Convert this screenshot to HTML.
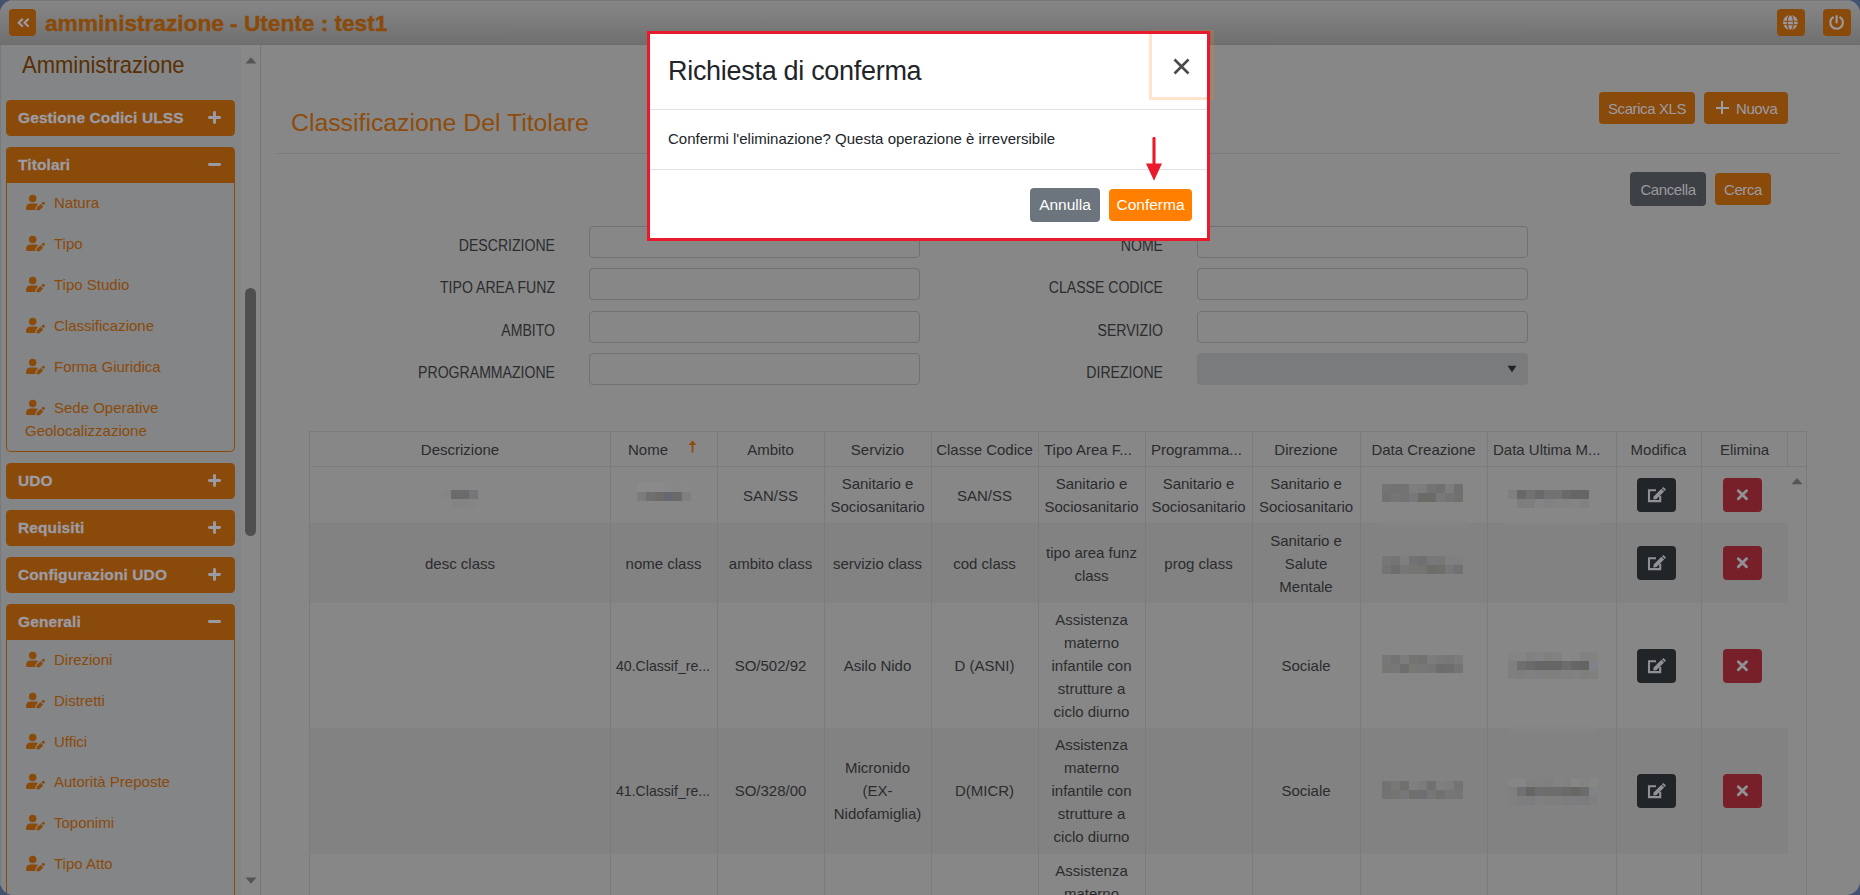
<!DOCTYPE html>
<html><head><meta charset="utf-8">
<style>
*{box-sizing:border-box;}
html,body{margin:0;padding:0;}
body{width:1860px;height:895px;overflow:hidden;background:#435270;font-family:"Liberation Sans",sans-serif;position:relative;}
.win{position:absolute;left:0;top:0;width:1860px;height:895px;border-radius:14px;overflow:hidden;background:#878787;}
.a{position:absolute;white-space:nowrap;}
.hdr{position:absolute;left:0;top:0;width:1860px;height:45px;background:linear-gradient(#878787,#707070 97%,#6a6a6a);}
.obtn{position:absolute;background:#8a4a0a;border-radius:4px;}
.side{position:absolute;left:0;top:45px;width:241px;height:850px;background:#848587;border-left:1px solid #77797d;}
.track{position:absolute;left:241px;top:45px;width:19px;height:850px;background:#888888;}
.vline{position:absolute;left:260px;top:45px;width:1px;height:850px;background:#767676;}
.ph{position:absolute;left:6px;width:229px;height:36px;background:#8a4a0a;border-radius:4.5px;}
.ph .t{position:absolute;left:12px;top:8.5px;font-weight:bold;font-size:15.5px;-webkit-text-stroke:0.3px #9c9ca6;letter-spacing:0.1px;color:#9c9ca6;white-space:nowrap;}
.ph .pl{position:absolute;left:202px;top:11px;width:13.3px;height:13.3px;}
.ph .pl:before{content:"";position:absolute;left:0;top:5.2px;width:13.3px;height:2.8px;background:#9a9aa4;border-radius:1.4px;}
.ph .pl.plus:after{content:"";position:absolute;left:5.25px;top:0;width:2.8px;height:13.3px;background:#9a9aa4;border-radius:1.4px;}
.pbody{position:absolute;left:6px;width:229px;border:1px solid #8a4a0a;border-top:none;border-radius:0 0 5px 5px;}
.it{position:absolute;left:20px;font-size:15px;color:#8a4a0a;white-space:nowrap;}
.ic{position:absolute;left:26px;width:20px;height:16px;}
.lbl{font-size:16px;color:#2b2c2e;transform:scaleX(0.88);transform-origin:100% 50%;}
.inp{width:331px;height:32px;border:1px solid #6f7174;border-radius:4px;}
.inp.sel{background:#7a7b7d;border-color:#7a7b7d;}
.hl{height:1px;background:#7a7b7d;}
.vl{width:1px;background:#7a7b7d;}
.td{font-size:15px;line-height:23px;color:#2b2c2e;text-align:center;}
.ebtn{width:39px;height:34px;background:#212528;border-radius:4px;}
.dbtn{width:39px;height:34px;background:#77202a;border-radius:4px;}
</style></head><body>
<div class="win">
  <div class="hdr"></div>
  <div class="a" style="left:0;top:0;width:1860px;height:1px;background:#75777b"></div>
  <div class="obtn" style="left:9px;top:9px;width:27px;height:27px;">
    <svg width="27" height="27" viewBox="0 0 27 27" style="position:absolute;left:0;top:0"><path d="M13.2 10.4 L9.6 13.7 L13.2 17.0 M19.0 10.4 L15.4 13.7 L19.0 17.0" stroke="#9a9aa4" stroke-width="2.2" fill="none" stroke-linecap="round" stroke-linejoin="round"/></svg>
  </div>
  <div class="a" id="ttl" style="left:45px;top:10px;font-size:22.8px;letter-spacing:-0.07px;-webkit-text-stroke:0.35px #8a4a0a;font-weight:bold;color:#8a4a0a;">amministrazione - Utente : test1</div>
  <div class="obtn" style="left:1777px;top:9px;width:28px;height:27px;">
    <svg width="28" height="27" viewBox="0 0 28 27" style="position:absolute;left:0;top:0"><circle cx="13.4" cy="13.5" r="7.4" fill="#9a9aa4"/><g fill="none" stroke="#8a4a0a" stroke-width="1.1"><ellipse cx="13.4" cy="13.5" rx="3.1" ry="7.8"/><line x1="5" y1="12.2" x2="22" y2="12.2"/><line x1="5" y1="15.8" x2="22" y2="15.8"/></g></svg>
  </div>
  <div class="obtn" style="left:1823px;top:9px;width:28px;height:27px;">
    <svg width="28" height="27" viewBox="0 0 28 27" style="position:absolute;left:0;top:0"><g fill="none" stroke="#9a9aa4" stroke-width="2.1" stroke-linecap="round"><path d="M9.99 8.34 A6.3 6.3 0 1 0 17.21 8.34"/><line x1="13.6" y1="7.1" x2="13.6" y2="13.5"/></g></svg>
  </div>

  <div class="side"></div>
  <div class="track"></div>
  <div class="vline"></div>
<!--SIDE-->
<div class="a" id="amm" style="left:22px;top:52.5px;font-size:22px;color:#573004;transform:scaleY(1.12);transform-origin:0 20.3px;">Amministrazione</div>
<div class="ph" style="top:100px"><div class="t">Gestione Codici ULSS</div><div class="pl plus"></div></div>
<div class="ph" style="top:147px;border-radius:4.5px 4.5px 0 0"><div class="t">Titolari</div><div class="pl"></div></div>
<div class="pbody" style="top:182px;height:270px"></div>
<svg class="a" style="left:22px;top:190px" width="28" height="24" viewBox="0 0 28 24"><g fill="#8a4a0a"><circle cx="10.7" cy="8.6" r="3.75"/><path d="M4 18.4 Q4 13.4 8.8 13.4 L13.4 13.4 Q15.4 13.4 15.9 14.5 L13.6 17.2 L13.3 20 L5.3 20 Q4 20 4 18.4Z"/><path d="M14.5 20.2 L14.9 17.6 L18.6 13.9 L21.2 16.5 L17.5 20.2Z"/><circle cx="21.3" cy="13.3" r="1.5"/></g></svg>
<div class="it" style="left:54px;top:193.5px">Natura</div>
<svg class="a" style="left:22px;top:231px" width="28" height="24" viewBox="0 0 28 24"><g fill="#8a4a0a"><circle cx="10.7" cy="8.6" r="3.75"/><path d="M4 18.4 Q4 13.4 8.8 13.4 L13.4 13.4 Q15.4 13.4 15.9 14.5 L13.6 17.2 L13.3 20 L5.3 20 Q4 20 4 18.4Z"/><path d="M14.5 20.2 L14.9 17.6 L18.6 13.9 L21.2 16.5 L17.5 20.2Z"/><circle cx="21.3" cy="13.3" r="1.5"/></g></svg>
<div class="it" style="left:54px;top:234.5px">Tipo</div>
<svg class="a" style="left:22px;top:272px" width="28" height="24" viewBox="0 0 28 24"><g fill="#8a4a0a"><circle cx="10.7" cy="8.6" r="3.75"/><path d="M4 18.4 Q4 13.4 8.8 13.4 L13.4 13.4 Q15.4 13.4 15.9 14.5 L13.6 17.2 L13.3 20 L5.3 20 Q4 20 4 18.4Z"/><path d="M14.5 20.2 L14.9 17.6 L18.6 13.9 L21.2 16.5 L17.5 20.2Z"/><circle cx="21.3" cy="13.3" r="1.5"/></g></svg>
<div class="it" style="left:54px;top:275.5px">Tipo Studio</div>
<svg class="a" style="left:22px;top:313px" width="28" height="24" viewBox="0 0 28 24"><g fill="#8a4a0a"><circle cx="10.7" cy="8.6" r="3.75"/><path d="M4 18.4 Q4 13.4 8.8 13.4 L13.4 13.4 Q15.4 13.4 15.9 14.5 L13.6 17.2 L13.3 20 L5.3 20 Q4 20 4 18.4Z"/><path d="M14.5 20.2 L14.9 17.6 L18.6 13.9 L21.2 16.5 L17.5 20.2Z"/><circle cx="21.3" cy="13.3" r="1.5"/></g></svg>
<div class="it" style="left:54px;top:316.5px">Classificazione</div>
<svg class="a" style="left:22px;top:354px" width="28" height="24" viewBox="0 0 28 24"><g fill="#8a4a0a"><circle cx="10.7" cy="8.6" r="3.75"/><path d="M4 18.4 Q4 13.4 8.8 13.4 L13.4 13.4 Q15.4 13.4 15.9 14.5 L13.6 17.2 L13.3 20 L5.3 20 Q4 20 4 18.4Z"/><path d="M14.5 20.2 L14.9 17.6 L18.6 13.9 L21.2 16.5 L17.5 20.2Z"/><circle cx="21.3" cy="13.3" r="1.5"/></g></svg>
<div class="it" style="left:54px;top:357.5px">Forma Giuridica</div>
<svg class="a" style="left:22px;top:395px" width="28" height="24" viewBox="0 0 28 24"><g fill="#8a4a0a"><circle cx="10.7" cy="8.6" r="3.75"/><path d="M4 18.4 Q4 13.4 8.8 13.4 L13.4 13.4 Q15.4 13.4 15.9 14.5 L13.6 17.2 L13.3 20 L5.3 20 Q4 20 4 18.4Z"/><path d="M14.5 20.2 L14.9 17.6 L18.6 13.9 L21.2 16.5 L17.5 20.2Z"/><circle cx="21.3" cy="13.3" r="1.5"/></g></svg>
<div class="it" style="left:54px;top:398.5px">Sede Operative</div>
<div class="it" style="left:25px;top:421.5px">Geolocalizzazione</div>
<div class="ph" style="top:463px"><div class="t">UDO</div><div class="pl plus"></div></div>
<div class="ph" style="top:510px"><div class="t">Requisiti</div><div class="pl plus"></div></div>
<div class="ph" style="top:557px"><div class="t">Configurazioni UDO</div><div class="pl plus"></div></div>
<div class="ph" style="top:604px;border-radius:4.5px 4.5px 0 0"><div class="t">Generali</div><div class="pl"></div></div>
<div class="pbody" style="top:639px;height:300px"></div>
<svg class="a" style="left:22px;top:647px" width="28" height="24" viewBox="0 0 28 24"><g fill="#8a4a0a"><circle cx="10.7" cy="8.6" r="3.75"/><path d="M4 18.4 Q4 13.4 8.8 13.4 L13.4 13.4 Q15.4 13.4 15.9 14.5 L13.6 17.2 L13.3 20 L5.3 20 Q4 20 4 18.4Z"/><path d="M14.5 20.2 L14.9 17.6 L18.6 13.9 L21.2 16.5 L17.5 20.2Z"/><circle cx="21.3" cy="13.3" r="1.5"/></g></svg>
<div class="it" style="left:54px;top:650.5px">Direzioni</div>
<svg class="a" style="left:22px;top:688px" width="28" height="24" viewBox="0 0 28 24"><g fill="#8a4a0a"><circle cx="10.7" cy="8.6" r="3.75"/><path d="M4 18.4 Q4 13.4 8.8 13.4 L13.4 13.4 Q15.4 13.4 15.9 14.5 L13.6 17.2 L13.3 20 L5.3 20 Q4 20 4 18.4Z"/><path d="M14.5 20.2 L14.9 17.6 L18.6 13.9 L21.2 16.5 L17.5 20.2Z"/><circle cx="21.3" cy="13.3" r="1.5"/></g></svg>
<div class="it" style="left:54px;top:691.5px">Distretti</div>
<svg class="a" style="left:22px;top:729px" width="28" height="24" viewBox="0 0 28 24"><g fill="#8a4a0a"><circle cx="10.7" cy="8.6" r="3.75"/><path d="M4 18.4 Q4 13.4 8.8 13.4 L13.4 13.4 Q15.4 13.4 15.9 14.5 L13.6 17.2 L13.3 20 L5.3 20 Q4 20 4 18.4Z"/><path d="M14.5 20.2 L14.9 17.6 L18.6 13.9 L21.2 16.5 L17.5 20.2Z"/><circle cx="21.3" cy="13.3" r="1.5"/></g></svg>
<div class="it" style="left:54px;top:732.5px">Uffici</div>
<svg class="a" style="left:22px;top:769px" width="28" height="24" viewBox="0 0 28 24"><g fill="#8a4a0a"><circle cx="10.7" cy="8.6" r="3.75"/><path d="M4 18.4 Q4 13.4 8.8 13.4 L13.4 13.4 Q15.4 13.4 15.9 14.5 L13.6 17.2 L13.3 20 L5.3 20 Q4 20 4 18.4Z"/><path d="M14.5 20.2 L14.9 17.6 L18.6 13.9 L21.2 16.5 L17.5 20.2Z"/><circle cx="21.3" cy="13.3" r="1.5"/></g></svg>
<div class="it" style="left:54px;top:772.5px">Autorità Preposte</div>
<svg class="a" style="left:22px;top:810px" width="28" height="24" viewBox="0 0 28 24"><g fill="#8a4a0a"><circle cx="10.7" cy="8.6" r="3.75"/><path d="M4 18.4 Q4 13.4 8.8 13.4 L13.4 13.4 Q15.4 13.4 15.9 14.5 L13.6 17.2 L13.3 20 L5.3 20 Q4 20 4 18.4Z"/><path d="M14.5 20.2 L14.9 17.6 L18.6 13.9 L21.2 16.5 L17.5 20.2Z"/><circle cx="21.3" cy="13.3" r="1.5"/></g></svg>
<div class="it" style="left:54px;top:813.5px">Toponimi</div>
<svg class="a" style="left:22px;top:851px" width="28" height="24" viewBox="0 0 28 24"><g fill="#8a4a0a"><circle cx="10.7" cy="8.6" r="3.75"/><path d="M4 18.4 Q4 13.4 8.8 13.4 L13.4 13.4 Q15.4 13.4 15.9 14.5 L13.6 17.2 L13.3 20 L5.3 20 Q4 20 4 18.4Z"/><path d="M14.5 20.2 L14.9 17.6 L18.6 13.9 L21.2 16.5 L17.5 20.2Z"/><circle cx="21.3" cy="13.3" r="1.5"/></g></svg>
<div class="it" style="left:54px;top:854.5px">Tipo Atto</div>
<svg class="a" style="left:244.5px;top:56.5px" width="12" height="8" viewBox="0 0 12 8"><path d="M0.5 6.5 L6 0.3 L11.5 6.5Z" fill="#555555"/></svg>
<svg class="a" style="left:244.5px;top:876.5px" width="12" height="8" viewBox="0 0 12 8"><path d="M0.5 0.5 L11.5 0.5 L6 6.8Z" fill="#555555"/></svg>
<div class="a" style="left:245px;top:288px;width:11px;height:248px;border-radius:6px;background:#4f4f4f"></div>
<!--/SIDE-->
<!--MAIN-->
<div class="a" id="mtitle" style="left:291px;top:108.5px;font-size:24.8px;color:#8d4c0c;">Classificazione Del Titolare</div>
<div class="a" style="left:276px;top:153px;width:1565px;height:1px;background:#777b80"></div>
<div class="a" style="left:1599px;top:92px;width:96px;height:32px;background:#8a4a0a;border-radius:4px;"></div>
<div class="a" id="xls" style="left:1599px;top:93px;width:96px;height:32px;line-height:32px;text-align:center;font-size:15px;letter-spacing:-0.4px;color:#9c9ca6;">Scarica XLS</div>
<div class="a" style="left:1704px;top:92px;width:84px;height:32px;background:#8a4a0a;border-radius:4px;"></div>
<div class="a" style="left:1715.5px;top:106.5px;width:13px;height:2.2px;background:#9c9ca6"></div><div class="a" style="left:1720.9px;top:101px;width:2.2px;height:13px;background:#9c9ca6"></div>
<div class="a" id="nuova" style="left:1736px;top:93px;height:32px;line-height:32px;font-size:15px;letter-spacing:-0.4px;color:#9c9ca6;">Nuova</div>
<div class="a" style="left:1630px;top:172px;width:76px;height:34px;background:#3d4044;border-radius:4px;"></div>
<div class="a" id="canc" style="left:1630px;top:173px;width:76px;height:34px;line-height:34px;text-align:center;font-size:15px;letter-spacing:-0.4px;color:#9a9ba0;">Cancella</div>
<div class="a" style="left:1715px;top:173px;width:56px;height:32px;background:#8a4a0a;border-radius:4px;"></div>
<div class="a" id="cerca" style="left:1715px;top:174px;width:56px;height:32px;line-height:32px;text-align:center;font-size:15px;letter-spacing:-0.4px;color:#9c9ca6;">Cerca</div>
<div class="a lbl" style="left:355px;width:200px;top:237.3px;text-align:right;">DESCRIZIONE</div>
<div class="a inp" style="left:589px;top:226px;"></div>
<div class="a lbl" style="left:963px;width:200px;top:237.3px;text-align:right;">NOME</div>
<div class="a inp" style="left:1197px;top:226px;"></div>
<div class="a lbl" style="left:355px;width:200px;top:279.3px;text-align:right;">TIPO AREA FUNZ</div>
<div class="a inp" style="left:589px;top:268px;"></div>
<div class="a lbl" style="left:963px;width:200px;top:279.3px;text-align:right;">CLASSE CODICE</div>
<div class="a inp" style="left:1197px;top:268px;"></div>
<div class="a lbl" style="left:355px;width:200px;top:322.3px;text-align:right;">AMBITO</div>
<div class="a inp" style="left:589px;top:311px;"></div>
<div class="a lbl" style="left:963px;width:200px;top:322.3px;text-align:right;">SERVIZIO</div>
<div class="a inp" style="left:1197px;top:311px;"></div>
<div class="a lbl" style="left:355px;width:200px;top:364.3px;text-align:right;">PROGRAMMAZIONE</div>
<div class="a inp" style="left:589px;top:353px;"></div>
<div class="a lbl" style="left:963px;width:200px;top:364.3px;text-align:right;">DIREZIONE</div>
<div class="a inp sel" style="left:1197px;top:353px;"></div>
<svg class="a" style="left:1506.5px;top:365.3px" width="10" height="9" viewBox="0 0 10 9"><path d="M0.5 0.8 L9.5 0.8 L5 7.2Z" fill="#1f2226"/></svg>
<div class="a" style="left:310px;top:523px;width:1478px;height:79.60000000000002px;background:#828282"></div>
<div class="a" style="left:310px;top:728.2px;width:1478px;height:125.5px;background:#828282"></div>
<div class="a hl" style="left:309px;top:431px;width:1497px;"></div>
<div class="a hl" style="left:309px;top:466px;width:1497px;"></div>
<div class="a vl" style="left:309px;top:431px;height:470px;"></div>
<div class="a vl" style="left:610px;top:431px;height:470px;"></div>
<div class="a vl" style="left:717px;top:431px;height:470px;"></div>
<div class="a vl" style="left:824px;top:431px;height:470px;"></div>
<div class="a vl" style="left:931px;top:431px;height:470px;"></div>
<div class="a vl" style="left:1038px;top:431px;height:470px;"></div>
<div class="a vl" style="left:1145px;top:431px;height:470px;"></div>
<div class="a vl" style="left:1252px;top:431px;height:470px;"></div>
<div class="a vl" style="left:1360px;top:431px;height:470px;"></div>
<div class="a vl" style="left:1487px;top:431px;height:470px;"></div>
<div class="a vl" style="left:1616px;top:431px;height:470px;"></div>
<div class="a vl" style="left:1701px;top:431px;height:470px;"></div>
<div class="a vl" style="left:1806px;top:431px;height:470px;"></div>
<div class="a vl" style="left:1787px;top:431px;height:35px;"></div>
<div class="a td" style="left:310px;width:300px;top:438px;">Descrizione</div>
<div class="a td" style="left:594.5px;width:107px;top:438px;">Nome</div>
<div class="a td" style="left:717px;width:107px;top:438px;">Ambito</div>
<div class="a td" style="left:824px;width:107px;top:438px;">Servizio</div>
<div class="a td" style="left:931px;width:107px;top:438px;">Classe Codice</div>
<div class="a td" style="left:1044px;top:438px;text-align:left;">Tipo Area F...</div>
<div class="a td" style="left:1151px;top:438px;text-align:left;">Programma...</div>
<div class="a td" style="left:1252px;width:108px;top:438px;">Direzione</div>
<div class="a td" style="left:1360px;width:127px;top:438px;">Data Creazione</div>
<div class="a td" style="left:1493px;top:438px;text-align:left;">Data Ultima M...</div>
<div class="a td" style="left:1616px;width:85px;top:438px;">Modifica</div>
<div class="a td" style="left:1701px;width:87px;top:438px;">Elimina</div>
<svg class="a" style="left:688px;top:440px" width="9" height="13" viewBox="0 0 9 13"><path d="M4.5 0.5 L8.5 5 L5.4 5 L5.4 12.5 L3.6 12.5 L3.6 5 L0.5 5Z" fill="#8d4c0c"/></svg>
<div class="a td" style="left:717px;width:107px;top:483.7px;">SAN/SS</div>
<div class="a td" style="left:824px;width:107px;top:472.2px;">Sanitario e<br>Sociosanitario</div>
<div class="a td" style="left:931px;width:107px;top:483.7px;">SAN/SS</div>
<div class="a td" style="left:1038px;width:107px;top:472.2px;">Sanitario e<br>Sociosanitario</div>
<div class="a td" style="left:1145px;width:107px;top:472.2px;">Sanitario e<br>Sociosanitario</div>
<div class="a td" style="left:1252px;width:108px;top:472.2px;">Sanitario e<br>Sociosanitario</div>
<div class="a ebtn" style="left:1637px;top:478.0px;"><svg width="39" height="34" viewBox="0 0 39 34"><path d="M19 12.2 L12 12.2 L12 23.1 L23.2 23.1 L23.2 17.8" stroke="#8f9194" stroke-width="2.1" fill="none"/><path d="M16.3 21.6 L16.6 18.6 L24.4 10.8 L27.1 13.5 L19.3 21.3Z M25.0 10.2 L27.7 12.9 L29.0 11.6 L26.3 8.9Z" fill="#8f9194"/></svg></div>
<div class="a dbtn" style="left:1723px;top:478.0px;"><svg width="39" height="34" viewBox="0 0 39 34"><path d="M15.3 12.8 L23.5 20.8 M23.5 12.8 L15.3 20.8" stroke="#8f9194" stroke-width="2.9" stroke-linecap="round"/></svg></div>
<div class="a td" style="left:310px;width:300px;top:552.0px;">desc class</div>
<div class="a td" style="left:610px;width:107px;top:552.0px;">nome class</div>
<div class="a td" style="left:717px;width:107px;top:552.0px;">ambito class</div>
<div class="a td" style="left:824px;width:107px;top:552.0px;">servizio class</div>
<div class="a td" style="left:931px;width:107px;top:552.0px;">cod class</div>
<div class="a td" style="left:1038px;width:107px;top:540.5px;">tipo area funz<br>class</div>
<div class="a td" style="left:1145px;width:107px;top:552.0px;">prog class</div>
<div class="a td" style="left:1252px;width:108px;top:529.0px;">Sanitario e<br>Salute<br>Mentale</div>
<div class="a ebtn" style="left:1637px;top:546.3px;"><svg width="39" height="34" viewBox="0 0 39 34"><path d="M19 12.2 L12 12.2 L12 23.1 L23.2 23.1 L23.2 17.8" stroke="#8f9194" stroke-width="2.1" fill="none"/><path d="M16.3 21.6 L16.6 18.6 L24.4 10.8 L27.1 13.5 L19.3 21.3Z M25.0 10.2 L27.7 12.9 L29.0 11.6 L26.3 8.9Z" fill="#8f9194"/></svg></div>
<div class="a dbtn" style="left:1723px;top:546.3px;"><svg width="39" height="34" viewBox="0 0 39 34"><path d="M15.3 12.8 L23.5 20.8 M23.5 12.8 L15.3 20.8" stroke="#8f9194" stroke-width="2.9" stroke-linecap="round"/></svg></div>
<div class="a td" style="left:616px;top:653.5000000000001px;text-align:left;transform:scaleX(0.94);transform-origin:0 0;">40.Classif_re...</div>
<div class="a td" style="left:717px;width:107px;top:653.5000000000001px;">SO/502/92</div>
<div class="a td" style="left:824px;width:107px;top:653.5000000000001px;">Asilo Nido</div>
<div class="a td" style="left:931px;width:107px;top:653.5000000000001px;">D (ASNI)</div>
<div class="a td" style="left:1038px;width:107px;top:607.5000000000001px;">Assistenza<br>materno<br>infantile con<br>strutture a<br>ciclo diurno</div>
<div class="a td" style="left:1252px;width:108px;top:653.5000000000001px;">Sociale</div>
<div class="a ebtn" style="left:1637px;top:648.9000000000001px;"><svg width="39" height="34" viewBox="0 0 39 34"><path d="M19 12.2 L12 12.2 L12 23.1 L23.2 23.1 L23.2 17.8" stroke="#8f9194" stroke-width="2.1" fill="none"/><path d="M16.3 21.6 L16.6 18.6 L24.4 10.8 L27.1 13.5 L19.3 21.3Z M25.0 10.2 L27.7 12.9 L29.0 11.6 L26.3 8.9Z" fill="#8f9194"/></svg></div>
<div class="a dbtn" style="left:1723px;top:648.9000000000001px;"><svg width="39" height="34" viewBox="0 0 39 34"><path d="M15.3 12.8 L23.5 20.8 M23.5 12.8 L15.3 20.8" stroke="#8f9194" stroke-width="2.9" stroke-linecap="round"/></svg></div>
<div class="a td" style="left:616px;top:779.0500000000001px;text-align:left;transform:scaleX(0.94);transform-origin:0 0;">41.Classif_re...</div>
<div class="a td" style="left:717px;width:107px;top:779.0500000000001px;">SO/328/00</div>
<div class="a td" style="left:824px;width:107px;top:756.0500000000001px;">Micronido<br>(EX-<br>Nidofamiglia)</div>
<div class="a td" style="left:931px;width:107px;top:779.0500000000001px;">D(MICR)</div>
<div class="a td" style="left:1038px;width:107px;top:733.0500000000001px;">Assistenza<br>materno<br>infantile con<br>strutture a<br>ciclo diurno</div>
<div class="a td" style="left:1252px;width:108px;top:779.0500000000001px;">Sociale</div>
<div class="a ebtn" style="left:1637px;top:774.45px;"><svg width="39" height="34" viewBox="0 0 39 34"><path d="M19 12.2 L12 12.2 L12 23.1 L23.2 23.1 L23.2 17.8" stroke="#8f9194" stroke-width="2.1" fill="none"/><path d="M16.3 21.6 L16.6 18.6 L24.4 10.8 L27.1 13.5 L19.3 21.3Z M25.0 10.2 L27.7 12.9 L29.0 11.6 L26.3 8.9Z" fill="#8f9194"/></svg></div>
<div class="a dbtn" style="left:1723px;top:774.45px;"><svg width="39" height="34" viewBox="0 0 39 34"><path d="M15.3 12.8 L23.5 20.8 M23.5 12.8 L15.3 20.8" stroke="#8f9194" stroke-width="2.9" stroke-linecap="round"/></svg></div>
<div class="a td" style="left:1038px;width:107px;top:859.2px;">Assistenza<br>materno<br>infantile con<br>strutture a<br>ciclo diurno</div>
<div class="a" style="left:442px;top:490px;width:9px;height:9px;background:#858585"></div>
<div class="a" style="left:451px;top:490px;width:9px;height:9px;background:#6b6b6b"></div>
<div class="a" style="left:460px;top:490px;width:9px;height:9px;background:#6b6b6b"></div>
<div class="a" style="left:469px;top:490px;width:9px;height:9px;background:#757679"></div>
<div class="a" style="left:451px;top:499px;width:9px;height:9px;background:#848484"></div>
<div class="a" style="left:460px;top:499px;width:9px;height:9px;background:#848484"></div>
<div class="a" style="left:469px;top:499px;width:9px;height:9px;background:#858585"></div>
<div class="a" style="left:637px;top:483px;width:9px;height:9px;background:#8a8a8a"></div>
<div class="a" style="left:646px;top:483px;width:9px;height:9px;background:#8a8a8a"></div>
<div class="a" style="left:655px;top:483px;width:9px;height:9px;background:#8a8a8a"></div>
<div class="a" style="left:664px;top:483px;width:9px;height:9px;background:#878889"></div>
<div class="a" style="left:673px;top:483px;width:9px;height:9px;background:#878787"></div>
<div class="a" style="left:682px;top:483px;width:9px;height:9px;background:#888888"></div>
<div class="a" style="left:637px;top:492px;width:9px;height:9px;background:#7c7c7d"></div>
<div class="a" style="left:646px;top:492px;width:9px;height:9px;background:#6e6f71"></div>
<div class="a" style="left:655px;top:492px;width:9px;height:9px;background:#6d6a68"></div>
<div class="a" style="left:664px;top:492px;width:9px;height:9px;background:#656870"></div>
<div class="a" style="left:673px;top:492px;width:9px;height:9px;background:#6b6a68"></div>
<div class="a" style="left:682px;top:492px;width:9px;height:9px;background:#7f7f80"></div>
<div class="a" style="left:1382px;top:484px;width:9px;height:9px;background:#747476"></div>
<div class="a" style="left:1391px;top:484px;width:9px;height:9px;background:#727272"></div>
<div class="a" style="left:1400px;top:484px;width:9px;height:9px;background:#737374"></div>
<div class="a" style="left:1409px;top:484px;width:9px;height:9px;background:#7e7e7f"></div>
<div class="a" style="left:1418px;top:484px;width:9px;height:9px;background:#7c7c7b"></div>
<div class="a" style="left:1427px;top:484px;width:9px;height:9px;background:#737374"></div>
<div class="a" style="left:1436px;top:484px;width:9px;height:9px;background:#707071"></div>
<div class="a" style="left:1445px;top:484px;width:9px;height:9px;background:#7d7d7f"></div>
<div class="a" style="left:1454px;top:484px;width:9px;height:9px;background:#707073"></div>
<div class="a" style="left:1382px;top:493px;width:9px;height:9px;background:#717172"></div>
<div class="a" style="left:1391px;top:493px;width:9px;height:9px;background:#757575"></div>
<div class="a" style="left:1400px;top:493px;width:9px;height:9px;background:#737371"></div>
<div class="a" style="left:1409px;top:493px;width:9px;height:9px;background:#78787a"></div>
<div class="a" style="left:1418px;top:493px;width:9px;height:9px;background:#6a6a67"></div>
<div class="a" style="left:1427px;top:493px;width:9px;height:9px;background:#6a6a67"></div>
<div class="a" style="left:1436px;top:493px;width:9px;height:9px;background:#78787b"></div>
<div class="a" style="left:1445px;top:493px;width:9px;height:9px;background:#747474"></div>
<div class="a" style="left:1454px;top:493px;width:9px;height:9px;background:#70706d"></div>
<div class="a" style="left:1508px;top:490px;width:9px;height:9px;background:#7f7f80"></div>
<div class="a" style="left:1517px;top:490px;width:9px;height:9px;background:#686866"></div>
<div class="a" style="left:1526px;top:490px;width:9px;height:9px;background:#71716f"></div>
<div class="a" style="left:1535px;top:490px;width:9px;height:9px;background:#69696a"></div>
<div class="a" style="left:1544px;top:490px;width:9px;height:9px;background:#727272"></div>
<div class="a" style="left:1553px;top:490px;width:9px;height:9px;background:#727273"></div>
<div class="a" style="left:1562px;top:490px;width:9px;height:9px;background:#6a6a6c"></div>
<div class="a" style="left:1571px;top:490px;width:9px;height:9px;background:#666668"></div>
<div class="a" style="left:1580px;top:490px;width:9px;height:9px;background:#666665"></div>
<div class="a" style="left:1517px;top:499px;width:9px;height:9px;background:#7e7e7e"></div>
<div class="a" style="left:1526px;top:499px;width:9px;height:9px;background:#7e7e7d"></div>
<div class="a" style="left:1535px;top:499px;width:9px;height:9px;background:#848486"></div>
<div class="a" style="left:1544px;top:499px;width:9px;height:9px;background:#818183"></div>
<div class="a" style="left:1553px;top:499px;width:9px;height:9px;background:#848483"></div>
<div class="a" style="left:1562px;top:499px;width:9px;height:9px;background:#838384"></div>
<div class="a" style="left:1571px;top:499px;width:9px;height:9px;background:#848484"></div>
<div class="a" style="left:1580px;top:499px;width:9px;height:9px;background:#818181"></div>
<div class="a" style="left:1382px;top:556px;width:9px;height:9px;background:#777779"></div>
<div class="a" style="left:1391px;top:556px;width:9px;height:9px;background:#747474"></div>
<div class="a" style="left:1400px;top:556px;width:9px;height:9px;background:#7f7f82"></div>
<div class="a" style="left:1409px;top:556px;width:9px;height:9px;background:#727274"></div>
<div class="a" style="left:1418px;top:556px;width:9px;height:9px;background:#707071"></div>
<div class="a" style="left:1427px;top:556px;width:9px;height:9px;background:#78787a"></div>
<div class="a" style="left:1436px;top:556px;width:9px;height:9px;background:#777776"></div>
<div class="a" style="left:1445px;top:556px;width:9px;height:9px;background:#7f7f81"></div>
<div class="a" style="left:1454px;top:556px;width:9px;height:9px;background:#7f7f80"></div>
<div class="a" style="left:1382px;top:565px;width:9px;height:9px;background:#747473"></div>
<div class="a" style="left:1391px;top:565px;width:9px;height:9px;background:#6d6d6c"></div>
<div class="a" style="left:1400px;top:565px;width:9px;height:9px;background:#77777a"></div>
<div class="a" style="left:1409px;top:565px;width:9px;height:9px;background:#757572"></div>
<div class="a" style="left:1418px;top:565px;width:9px;height:9px;background:#747472"></div>
<div class="a" style="left:1427px;top:565px;width:9px;height:9px;background:#6c6c69"></div>
<div class="a" style="left:1436px;top:565px;width:9px;height:9px;background:#6e6e6b"></div>
<div class="a" style="left:1445px;top:565px;width:9px;height:9px;background:#777778"></div>
<div class="a" style="left:1454px;top:565px;width:9px;height:9px;background:#717174"></div>
<div class="a" style="left:1382px;top:655px;width:9px;height:9px;background:#777777"></div>
<div class="a" style="left:1391px;top:655px;width:9px;height:9px;background:#737376"></div>
<div class="a" style="left:1400px;top:655px;width:9px;height:9px;background:#7c7c7d"></div>
<div class="a" style="left:1409px;top:655px;width:9px;height:9px;background:#747472"></div>
<div class="a" style="left:1418px;top:655px;width:9px;height:9px;background:#727270"></div>
<div class="a" style="left:1427px;top:655px;width:9px;height:9px;background:#7c7c7e"></div>
<div class="a" style="left:1436px;top:655px;width:9px;height:9px;background:#797977"></div>
<div class="a" style="left:1445px;top:655px;width:9px;height:9px;background:#777779"></div>
<div class="a" style="left:1454px;top:655px;width:9px;height:9px;background:#7b7b7b"></div>
<div class="a" style="left:1382px;top:664px;width:9px;height:9px;background:#767675"></div>
<div class="a" style="left:1391px;top:664px;width:9px;height:9px;background:#777775"></div>
<div class="a" style="left:1400px;top:664px;width:9px;height:9px;background:#6e6e6e"></div>
<div class="a" style="left:1409px;top:664px;width:9px;height:9px;background:#787875"></div>
<div class="a" style="left:1418px;top:664px;width:9px;height:9px;background:#777778"></div>
<div class="a" style="left:1427px;top:664px;width:9px;height:9px;background:#767677"></div>
<div class="a" style="left:1436px;top:664px;width:9px;height:9px;background:#6d6d6c"></div>
<div class="a" style="left:1445px;top:664px;width:9px;height:9px;background:#6e6e6f"></div>
<div class="a" style="left:1454px;top:664px;width:9px;height:9px;background:#747476"></div>
<div class="a" style="left:1508px;top:652px;width:9px;height:9px;background:#848487"></div>
<div class="a" style="left:1517px;top:652px;width:9px;height:9px;background:#858588"></div>
<div class="a" style="left:1526px;top:652px;width:9px;height:9px;background:#808081"></div>
<div class="a" style="left:1535px;top:652px;width:9px;height:9px;background:#838386"></div>
<div class="a" style="left:1544px;top:652px;width:9px;height:9px;background:#80807f"></div>
<div class="a" style="left:1553px;top:652px;width:9px;height:9px;background:#818181"></div>
<div class="a" style="left:1562px;top:652px;width:9px;height:9px;background:#878786"></div>
<div class="a" style="left:1571px;top:652px;width:9px;height:9px;background:#868688"></div>
<div class="a" style="left:1580px;top:652px;width:9px;height:9px;background:#818183"></div>
<div class="a" style="left:1589px;top:652px;width:9px;height:9px;background:#838381"></div>
<div class="a" style="left:1508px;top:661px;width:9px;height:9px;background:#7f7f80"></div>
<div class="a" style="left:1517px;top:661px;width:9px;height:9px;background:#6f6f6e"></div>
<div class="a" style="left:1526px;top:661px;width:9px;height:9px;background:#6a6a6a"></div>
<div class="a" style="left:1535px;top:661px;width:9px;height:9px;background:#666667"></div>
<div class="a" style="left:1544px;top:661px;width:9px;height:9px;background:#666664"></div>
<div class="a" style="left:1553px;top:661px;width:9px;height:9px;background:#666668"></div>
<div class="a" style="left:1562px;top:661px;width:9px;height:9px;background:#6d6d6e"></div>
<div class="a" style="left:1571px;top:661px;width:9px;height:9px;background:#666665"></div>
<div class="a" style="left:1580px;top:661px;width:9px;height:9px;background:#646462"></div>
<div class="a" style="left:1589px;top:661px;width:9px;height:9px;background:#7f8286"></div>
<div class="a" style="left:1508px;top:670px;width:9px;height:9px;background:#7f7f7e"></div>
<div class="a" style="left:1517px;top:670px;width:9px;height:9px;background:#7e7e7d"></div>
<div class="a" style="left:1526px;top:670px;width:9px;height:9px;background:#808080"></div>
<div class="a" style="left:1535px;top:670px;width:9px;height:9px;background:#7f7f81"></div>
<div class="a" style="left:1544px;top:670px;width:9px;height:9px;background:#7f7f7e"></div>
<div class="a" style="left:1553px;top:670px;width:9px;height:9px;background:#7f7f80"></div>
<div class="a" style="left:1562px;top:670px;width:9px;height:9px;background:#80807e"></div>
<div class="a" style="left:1571px;top:670px;width:9px;height:9px;background:#818182"></div>
<div class="a" style="left:1580px;top:670px;width:9px;height:9px;background:#7e7e7d"></div>
<div class="a" style="left:1589px;top:670px;width:9px;height:9px;background:#80807e"></div>
<div class="a" style="left:1382px;top:781px;width:9px;height:9px;background:#727273"></div>
<div class="a" style="left:1391px;top:781px;width:9px;height:9px;background:#787876"></div>
<div class="a" style="left:1400px;top:781px;width:9px;height:9px;background:#70706f"></div>
<div class="a" style="left:1409px;top:781px;width:9px;height:9px;background:#7f7f82"></div>
<div class="a" style="left:1418px;top:781px;width:9px;height:9px;background:#7b7b7b"></div>
<div class="a" style="left:1427px;top:781px;width:9px;height:9px;background:#707070"></div>
<div class="a" style="left:1436px;top:781px;width:9px;height:9px;background:#7f7f7e"></div>
<div class="a" style="left:1445px;top:781px;width:9px;height:9px;background:#7d7d7f"></div>
<div class="a" style="left:1454px;top:781px;width:9px;height:9px;background:#737372"></div>
<div class="a" style="left:1382px;top:790px;width:9px;height:9px;background:#737374"></div>
<div class="a" style="left:1391px;top:790px;width:9px;height:9px;background:#747472"></div>
<div class="a" style="left:1400px;top:790px;width:9px;height:9px;background:#77777a"></div>
<div class="a" style="left:1409px;top:790px;width:9px;height:9px;background:#6f6f6d"></div>
<div class="a" style="left:1418px;top:790px;width:9px;height:9px;background:#6f6f72"></div>
<div class="a" style="left:1427px;top:790px;width:9px;height:9px;background:#767677"></div>
<div class="a" style="left:1436px;top:790px;width:9px;height:9px;background:#71716f"></div>
<div class="a" style="left:1445px;top:790px;width:9px;height:9px;background:#767676"></div>
<div class="a" style="left:1454px;top:790px;width:9px;height:9px;background:#757576"></div>
<div class="a" style="left:1508px;top:778px;width:9px;height:9px;background:#858584"></div>
<div class="a" style="left:1517px;top:778px;width:9px;height:9px;background:#868689"></div>
<div class="a" style="left:1526px;top:778px;width:9px;height:9px;background:#80807e"></div>
<div class="a" style="left:1535px;top:778px;width:9px;height:9px;background:#818181"></div>
<div class="a" style="left:1544px;top:778px;width:9px;height:9px;background:#808082"></div>
<div class="a" style="left:1553px;top:778px;width:9px;height:9px;background:#838381"></div>
<div class="a" style="left:1562px;top:778px;width:9px;height:9px;background:#818182"></div>
<div class="a" style="left:1571px;top:778px;width:9px;height:9px;background:#868684"></div>
<div class="a" style="left:1580px;top:778px;width:9px;height:9px;background:#838381"></div>
<div class="a" style="left:1589px;top:778px;width:9px;height:9px;background:#868684"></div>
<div class="a" style="left:1508px;top:787px;width:9px;height:9px;background:#7f7f80"></div>
<div class="a" style="left:1517px;top:787px;width:9px;height:9px;background:#717173"></div>
<div class="a" style="left:1526px;top:787px;width:9px;height:9px;background:#656564"></div>
<div class="a" style="left:1535px;top:787px;width:9px;height:9px;background:#6e6e71"></div>
<div class="a" style="left:1544px;top:787px;width:9px;height:9px;background:#6d6d6b"></div>
<div class="a" style="left:1553px;top:787px;width:9px;height:9px;background:#6d6d6f"></div>
<div class="a" style="left:1562px;top:787px;width:9px;height:9px;background:#6a6a68"></div>
<div class="a" style="left:1571px;top:787px;width:9px;height:9px;background:#676765"></div>
<div class="a" style="left:1580px;top:787px;width:9px;height:9px;background:#6c6c6b"></div>
<div class="a" style="left:1589px;top:787px;width:9px;height:9px;background:#7f8286"></div>
<div class="a" style="left:1508px;top:796px;width:9px;height:9px;background:#808081"></div>
<div class="a" style="left:1517px;top:796px;width:9px;height:9px;background:#7e7e80"></div>
<div class="a" style="left:1526px;top:796px;width:9px;height:9px;background:#7d7d7f"></div>
<div class="a" style="left:1535px;top:796px;width:9px;height:9px;background:#808082"></div>
<div class="a" style="left:1544px;top:796px;width:9px;height:9px;background:#7e7e7c"></div>
<div class="a" style="left:1553px;top:796px;width:9px;height:9px;background:#7f7f7f"></div>
<div class="a" style="left:1562px;top:796px;width:9px;height:9px;background:#7d7d7f"></div>
<div class="a" style="left:1571px;top:796px;width:9px;height:9px;background:#7d7d7f"></div>
<div class="a" style="left:1580px;top:796px;width:9px;height:9px;background:#7c7c7e"></div>
<div class="a" style="left:1589px;top:796px;width:9px;height:9px;background:#7f7f80"></div>
<div class="a" style="left:1382px;top:520px;width:85px;height:9px;background:#858585;opacity:.6"></div>
<div class="a" style="left:1508px;top:517px;width:89px;height:9px;background:#858585;opacity:.6"></div>
<div class="a" style="left:1508px;top:724px;width:89px;height:9px;background:#858585;opacity:.6"></div>
<svg class="a" style="left:1790.5px;top:477px" width="12" height="8" viewBox="0 0 12 8"><path d="M0.5 7.2 L6 0.9 L11.5 7.2Z" fill="#555555"/></svg>
<!--/MAIN-->
<!--MODAL-->
<div class="a" style="left:648px;top:33px;width:560px;height:206px;background:#fff;"></div>
<div class="a" style="left:1148.5px;top:29.5px;width:65px;height:70px;border:3.5px solid rgba(253,126,20,.22);"></div>
<div class="a" style="left:1152px;top:34.5px;width:54.5px;height:61.5px;background:#fff;"></div>
<div class="a" id="mt" style="left:668px;top:56px;font-size:27px;color:#212529;letter-spacing:-0.3px;">Richiesta di conferma</div>
<svg class="a" style="left:1172px;top:57px" width="19" height="19" viewBox="0 0 19 19"><path d="M2.5 2.5 L16.5 16.5 M16.5 2.5 L2.5 16.5" stroke="#4a4a4a" stroke-width="2.6"/></svg>
<div class="a" style="left:650px;top:109px;width:557px;height:1px;background:#dee2e6"></div>
<div class="a" id="mb" style="left:668px;top:130px;font-size:15px;color:#212529;">Confermi l'eliminazione? Questa operazione è irreversibile</div>
<div class="a" style="left:650px;top:169px;width:557px;height:1px;background:#dee2e6"></div>
<div class="a" style="left:1030px;top:188px;width:70px;height:34px;background:#6c757d;border-radius:4px;"></div>
<div class="a" id="ann" style="left:1030px;top:188px;width:70px;height:34px;line-height:34px;text-align:center;font-size:15.5px;color:#fff;">Annulla</div>
<div class="a" style="left:1109px;top:189px;width:83px;height:32px;background:#ff8000;border-radius:4px;"></div>
<div class="a" id="conf" style="left:1109px;top:189px;width:83px;height:32px;line-height:32px;text-align:center;font-size:15.5px;color:#fff;">Conferma</div>
<div class="a" style="left:646.5px;top:31px;width:563.5px;height:209.5px;border:3.5px solid #e91a2b;"></div>
<svg class="a" style="left:1140px;top:134px" width="28" height="50" viewBox="0 0 28 50"><path d="M14 4.3 L14 31" stroke="#e91a2b" stroke-width="3.1" stroke-linecap="round"/><path d="M6 29.5 L22 29.5 L14 46.8Z" fill="#e91a2b"/></svg>

<!--/MODAL-->
</div>
</body></html>
